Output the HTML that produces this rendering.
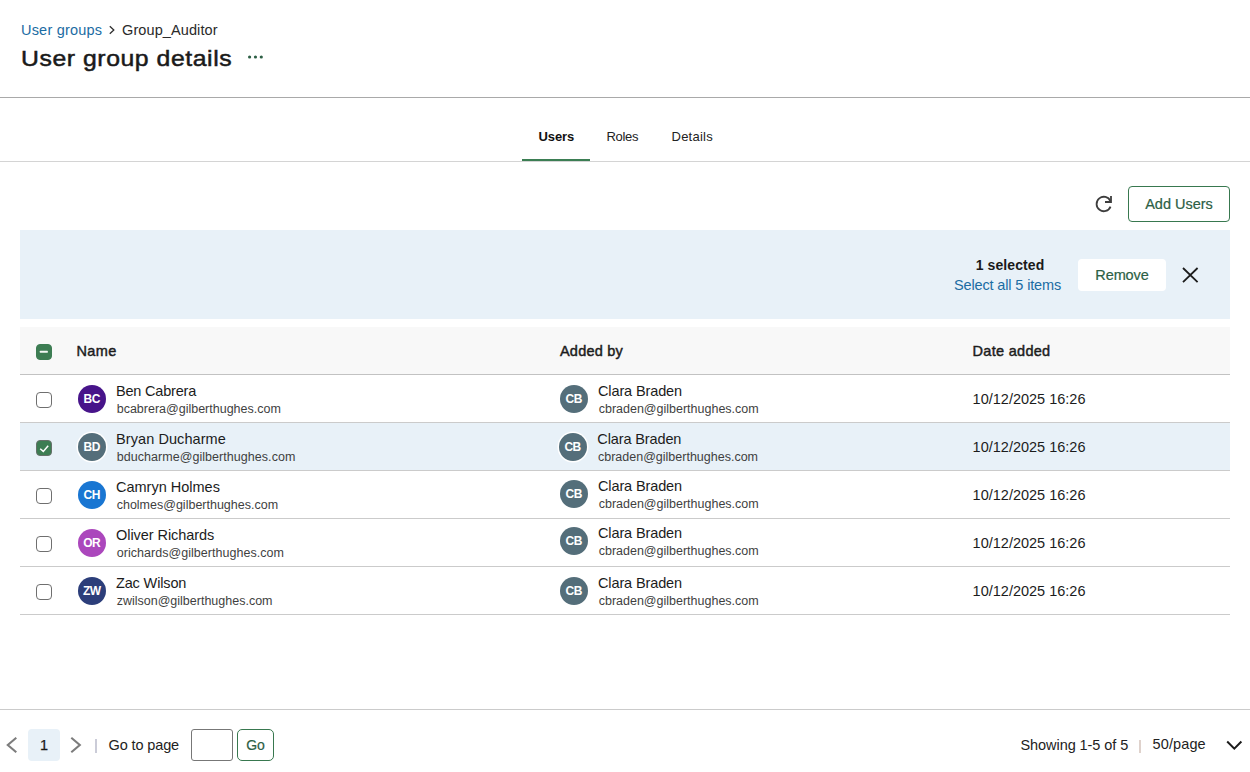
<!DOCTYPE html>
<html lang="en">
<head>
<meta charset="utf-8">
<title>User group details</title>
<style>
*{box-sizing:border-box;margin:0;padding:0}
html,body{width:1250px;height:772px;overflow:hidden;background:#fff}
body{font-family:"Liberation Sans","DejaVu Sans",sans-serif;color:#1c1c1c;font-size:14.5px;position:relative}
.abs{position:absolute;white-space:nowrap}
a{color:#1b6ca3;text-decoration:none}
.crumb{top:20px;font-size:14.5px;line-height:20px}
.title{left:21px;top:42.5px;font-size:22.5px;line-height:32px;letter-spacing:.5px;color:#1a1a1a;-webkit-text-stroke:.5px #1a1a1a;transform:scaleX(1.102);transform-origin:0 0}
.hr1{left:0;top:97px;width:1250px;height:1px;background:#a9a9a9}
.hr2{left:0;top:161px;width:1250px;height:1px;background:#d4d4d4}
.tab{top:127px;font-size:13px;line-height:20px;color:#222}
.tabline{left:522px;top:159px;width:68px;height:2px;background:#3b7e53}
.btn{border:1px solid #38784f;border-radius:4px;color:#2d5f45;background:#fff;text-align:center;-webkit-text-stroke:.2px #2d5f45}
.selbar{left:20px;top:230px;width:1210px;height:89px;background:#e8f1f8}
.thead{left:20px;top:327px;width:1210px;height:48px;background:#f8f8f8;border-bottom:1px solid #c2c2c2}
.th{top:341px;font-size:14.5px;line-height:20px;letter-spacing:.2px;color:#1c1c1c;-webkit-text-stroke:.45px #1c1c1c}
.row{left:20px;width:1210px;height:48px;border-bottom:1px solid #cbcbcb}
.row.sel{background:#e8f1f8}
.cb{position:absolute;left:16px;top:17px;width:16px;height:16px;border:1px solid #6f6f6f;border-radius:4px;background:#fff}
.cb.on{background:#3d7d53;border-color:#66706a}
.cb svg{position:absolute;left:-1px;top:-1px}
.av{position:absolute;top:10px;width:28px;height:28px;border-radius:50%;color:#fff;font-size:12px;font-weight:bold;line-height:28px;text-align:center;letter-spacing:-.5px;text-indent:-.5px}
.ring{box-shadow:0 0 0 1.5px #fff}
.nm{position:absolute;font-size:14.5px;line-height:18px;color:#1c1c1c;white-space:nowrap}
.em{position:absolute;font-size:12.5px;line-height:16px;color:#3f3f3f;white-space:nowrap}
.dt{position:absolute;left:952.6px;top:14px;font-size:14.5px;line-height:20px;white-space:nowrap}
.foot{left:0;top:709px;width:1250px;height:1px;background:#cbcbcb}
.ft{font-size:14.5px;line-height:20px;color:#222}
</style>
</head>
<body>
<div class="abs crumb" style="left:21px;letter-spacing:.2px"><a>User groups</a></div>
<svg class="abs" style="left:107px;top:24px" width="10" height="12" viewBox="0 0 10 12" fill="none" stroke="#2e2e2e" stroke-width="1.3"><path d="M2.8 2.3L6.8 6L2.8 9.7"/></svg>
<div class="abs crumb" style="left:122px;letter-spacing:.1px;color:#2a2a2a">Group_Auditor</div>
<div class="abs title">User group details</div>
<svg class="abs" style="left:246px;top:53px" width="20" height="8" viewBox="0 0 20 8" fill="#2d5f45"><circle cx="3.6" cy="4" r="1.6"/><circle cx="9.45" cy="4" r="1.6"/><circle cx="15.3" cy="4" r="1.6"/></svg>
<div class="abs hr1"></div>

<div class="abs tab" style="left:538.5px;font-weight:bold;color:#111;letter-spacing:-.1px">Users</div>
<div class="abs tab" style="left:606.5px;letter-spacing:-.3px">Roles</div>
<div class="abs tab" style="left:671.5px;letter-spacing:.25px">Details</div>
<div class="abs hr2"></div>
<div class="abs tabline"></div>

<svg class="abs" style="left:1094px;top:194px" width="20" height="20" viewBox="0 0 20 20" fill="none" stroke="#3d3d3d" stroke-width="1.8"><path d="M16.38 7.07A7.2 7.2 0 1 0 16.52 12.58"/><path d="M11 8H17V2"/></svg>
<div class="abs btn" style="left:1128px;top:186px;width:102px;height:36px;line-height:34px;font-size:14.5px">Add Users</div>

<div class="abs selbar"></div>
<div class="abs" style="left:975.7px;top:255px;font-weight:bold;font-size:14px;line-height:20px;color:#1a1a1a;letter-spacing:.1px">1 selected</div>
<div class="abs" style="left:954px;top:275px;font-size:14.5px;line-height:20px;letter-spacing:-.14px"><a>Select all 5 items</a></div>
<div class="abs" style="left:1078px;top:259px;width:88px;height:32px;border-radius:4px;background:#fff;color:#2d5f45;text-align:center;line-height:32px;font-size:14.5px;letter-spacing:-.1px;-webkit-text-stroke:.2px #2d5f45">Remove</div>
<svg class="abs" style="left:1180px;top:265px" width="20" height="20" viewBox="0 0 20 20" stroke="#1c1c1c" stroke-width="1.8" fill="none"><path d="M3 3L17.6 17.2M17.6 3L3 17.2"/></svg>

<div class="abs thead"><div class="cb on" style="border-color:#3d7d53"><svg width="16" height="16" viewBox="0 0 16 16"><rect x="3.8" y="6.8" width="8" height="2" rx=".5" fill="#f4f8f5"/></svg></div></div>
<div class="abs th" style="left:76.5px;letter-spacing:.4px">Name</div>
<div class="abs th" style="left:560px">Added by</div>
<div class="abs th" style="left:972.5px;letter-spacing:.3px">Date added</div>

<div class="abs row" style="top:375px">
  <div class="cb"></div>
  <div class="av" style="left:58px;background:#47148a">BC</div>
  <div class="nm" style="left:96px;top:7px;letter-spacing:-.2px">Ben Cabrera</div><div class="em" style="left:96.7px;top:26px">bcabrera@gilberthughes.com</div>
  <div class="av" style="left:540px;background:#546e7a">CB</div>
  <div class="nm" style="left:578px;top:7px;letter-spacing:-.12px">Clara Braden</div><div class="em" style="left:578.7px;top:26px">cbraden@gilberthughes.com</div>
  <div class="dt">10/12/2025 16:26</div>
</div>
<div class="abs row sel" style="top:423px">
  <div class="cb on"><svg width="16" height="16" viewBox="0 0 16 16" fill="none" stroke="#fff" stroke-width="1.5"><path d="M4.2 8.7L7.3 11.4L12.2 5.7"/></svg></div>
  <div class="av ring" style="left:58px;background:#546e7a">BD</div>
  <div class="nm" style="left:96px;top:7px;letter-spacing:.08px">Bryan Ducharme</div><div class="em" style="left:96.7px;top:26px;letter-spacing:.05px">bducharme@gilberthughes.com</div>
  <div class="av ring" style="left:538.8px;background:#546e7a">CB</div>
  <div class="nm" style="left:577.3px;top:7px;letter-spacing:-.12px">Clara Braden</div><div class="em" style="left:578px;top:26px">cbraden@gilberthughes.com</div>
  <div class="dt">10/12/2025 16:26</div>
</div>
<div class="abs row" style="top:471px">
  <div class="cb"></div>
  <div class="av" style="left:58px;background:#1976d2">CH</div>
  <div class="nm" style="left:96px;top:7px">Camryn Holmes</div><div class="em" style="left:96.7px;top:26px">cholmes@gilberthughes.com</div>
  <div class="av" style="left:540px;top:9px;background:#546e7a">CB</div>
  <div class="nm" style="left:578px;top:6px;letter-spacing:-.12px">Clara Braden</div><div class="em" style="left:578.7px;top:25px">cbraden@gilberthughes.com</div>
  <div class="dt">10/12/2025 16:26</div>
</div>
<div class="abs row" style="top:519px">
  <div class="cb"></div>
  <div class="av" style="left:58px;background:#ab47bc">OR</div>
  <div class="nm" style="left:96px;top:7px;letter-spacing:-.06px">Oliver Richards</div><div class="em" style="left:96.7px;top:26px;letter-spacing:.04px">orichards@gilberthughes.com</div>
  <div class="av" style="left:540px;top:8px;background:#546e7a">CB</div>
  <div class="nm" style="left:578px;top:5px;letter-spacing:-.12px">Clara Braden</div><div class="em" style="left:578.7px;top:24px">cbraden@gilberthughes.com</div>
  <div class="dt">10/12/2025 16:26</div>
</div>
<div class="abs row" style="top:567px">
  <div class="cb"></div>
  <div class="av" style="left:58px;background:#2c3e7a">ZW</div>
  <div class="nm" style="left:96px;top:7px;letter-spacing:-.15px">Zac Wilson</div><div class="em" style="left:96.7px;top:26px">zwilson@gilberthughes.com</div>
  <div class="av" style="left:540px;background:#546e7a">CB</div>
  <div class="nm" style="left:578px;top:7px;letter-spacing:-.12px">Clara Braden</div><div class="em" style="left:578.7px;top:26px">cbraden@gilberthughes.com</div>
  <div class="dt">10/12/2025 16:26</div>
</div>

<div class="abs foot"></div>
<svg class="abs" style="left:4px;top:735px" width="16" height="20" viewBox="0 0 16 20" fill="none" stroke="#7c7c7c" stroke-width="2.1"><path d="M12.3 2.8L3.8 10L12.3 17.2"/></svg>
<div class="abs" style="left:28px;top:729px;width:32px;height:32px;border-radius:4px;background:#e8f1f8;text-align:center;line-height:32px;font-size:14.5px;color:#1a1a1a;-webkit-text-stroke:.25px #1a1a1a">1</div>
<svg class="abs" style="left:68px;top:735px" width="16" height="20" viewBox="0 0 16 20" fill="none" stroke="#7c7c7c" stroke-width="2.1"><path d="M3.3 2.8L11.8 10L3.3 17.2"/></svg>
<div class="abs" style="left:95px;top:739px;width:1.5px;height:14px;background:#cbccd8"></div>
<div class="abs ft" style="left:108.5px;top:735px;letter-spacing:-.12px">Go to page</div>
<div class="abs" style="left:191px;top:729px;width:42px;height:32px;border:1px solid #777;border-radius:3px;background:#fff"></div>
<div class="abs btn" style="left:237px;top:729px;width:37px;height:32px;line-height:30px;font-size:14px;border-radius:5px">Go</div>

<div class="abs ft" style="left:1020.5px;top:735px;letter-spacing:-.07px">Showing 1-5 of 5</div>
<div class="abs" style="left:1139px;top:739.5px;width:1.5px;height:13px;background:#dfd2cc"></div>
<div class="abs ft" style="left:1152.6px;top:734px;letter-spacing:.1px">50/page</div>
<svg class="abs" style="left:1224px;top:735px" width="20" height="20" viewBox="0 0 20 20" fill="none" stroke="#1c1c1c" stroke-width="2"><path d="M3.2 6.5L10.3 13.6L17.4 6.5"/></svg>
</body>
</html>
